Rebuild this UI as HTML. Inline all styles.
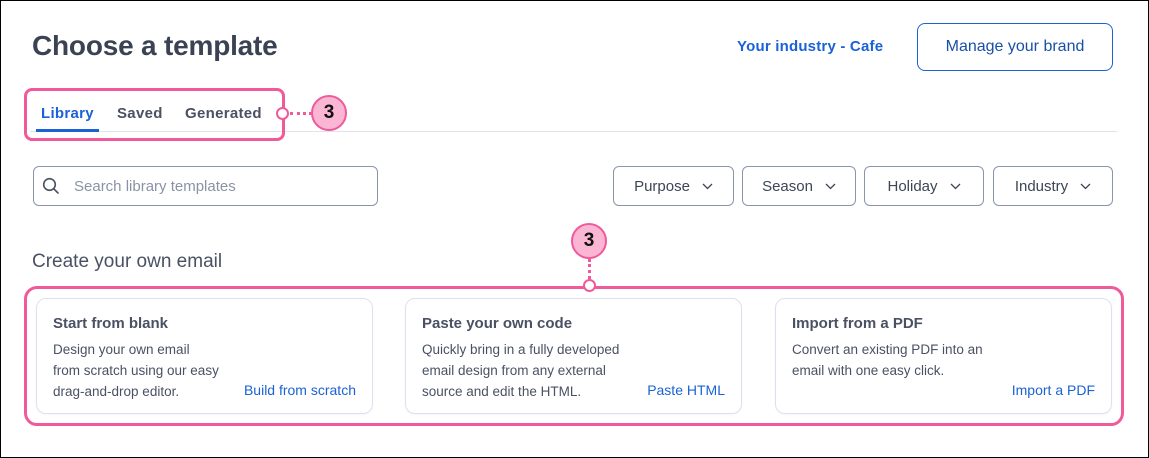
<!DOCTYPE html>
<html><head><style>
*{margin:0;padding:0;box-sizing:border-box}
body{width:1149px;height:458px;background:#fff;font-family:"Liberation Sans",sans-serif;position:relative;overflow:hidden}
.frame{position:absolute;left:0;top:0;width:1149px;height:458px;border:1px solid #000}
.a{position:absolute;white-space:nowrap}
h1{position:absolute;left:32px;top:30px;font-size:28px;font-weight:bold;color:#3a4254;letter-spacing:-0.2px}
.blue{color:#1a62d6}
.btn{position:absolute;border:1px solid #1a62d6;border-radius:8px;color:#1a4fa8;font-size:16px;display:flex;align-items:center;justify-content:center}
.dd{position:absolute;top:166px;height:40px;border:1px solid #8a95ab;border-radius:6px;font-size:15px;color:#3d4556;display:flex;align-items:center;justify-content:center;gap:12px}
.dd svg{width:11px;height:7px}
.card{position:absolute;top:298px;width:337px;height:116px;border:1px solid #dbe2ee;border-radius:10px;box-shadow:0 1px 2px rgba(0,0,0,.04)}
.card .t{position:absolute;left:16px;top:16px;font-size:15px;font-weight:bold;color:#4a5163}
.card .b{position:absolute;left:16px;top:40px;font-size:13.5px;line-height:21px;color:#4a5163;width:250px}
.card .l{position:absolute;right:16px;top:83px;font-size:14px;color:#1a62d6}
.pink{position:absolute;border:3px solid #f05a9a;border-radius:8px}
.dot{position:absolute;width:13px;height:13px;border:2.5px solid #f05a9a;border-radius:50%;background:#fff}
.num{position:absolute;width:36px;height:36px;border:2.5px solid #f05a9a;border-radius:50%;background:#fbb6d3;font-weight:bold;font-size:19px;color:#111;display:flex;align-items:center;justify-content:center}
.tab{position:absolute;top:105px;font-size:15px;font-weight:bold;letter-spacing:0.3px;white-space:nowrap}
</style></head><body>
<div class="frame"></div>
<h1>Choose a template</h1>
<div class="a blue" style="left:737px;top:38px;font-size:15px;font-weight:bold;letter-spacing:0.2px">Your industry - Cafe</div>
<div class="btn" style="left:917px;top:23px;width:196px;height:48px">Manage your brand</div>

<div class="a" style="left:30px;top:131px;width:1087px;height:1px;background:#dfe3ea"></div>
<div class="tab blue" style="left:41px">Library</div>
<div class="a" style="left:36px;top:129px;width:63px;height:3px;background:#1a62d6"></div>
<div class="tab" style="left:117px;color:#4a5163">Saved</div>
<div class="tab" style="left:185px;color:#4a5163">Generated</div>
<div class="pink" style="left:24px;top:88px;width:261px;height:53px"></div>
<div class="a" style="left:290px;top:112px;width:22px;border-top:3px dotted #f05a9a"></div>
<div class="dot" style="left:276px;top:107px"></div>
<div class="num" style="left:311px;top:95px">3</div>

<div class="a" style="left:33px;top:166px;width:345px;height:40px;border:1px solid #8a95ab;border-radius:6px"></div>
<svg class="a" style="left:42px;top:177px" width="18" height="18" viewBox="0 0 18 18"><circle cx="7.5" cy="7.5" r="5.8" fill="none" stroke="#4a5163" stroke-width="1.6"/><path d="M11.8 11.8L16 16" stroke="#4a5163" stroke-width="1.6" stroke-linecap="round"/></svg>
<div class="a" style="left:74px;top:178px;font-size:15px;color:#8a93a6">Search library templates</div>

<div class="dd" style="left:613px;width:121px">Purpose<svg viewBox="0 0 11 7"><path d="M1 1l4.5 4.5L10 1" fill="none" stroke="#3d4556" stroke-width="1.3"/></svg></div>
<div class="dd" style="left:742px;width:114px">Season<svg viewBox="0 0 11 7"><path d="M1 1l4.5 4.5L10 1" fill="none" stroke="#3d4556" stroke-width="1.3"/></svg></div>
<div class="dd" style="left:864px;width:120px">Holiday<svg viewBox="0 0 11 7"><path d="M1 1l4.5 4.5L10 1" fill="none" stroke="#3d4556" stroke-width="1.3"/></svg></div>
<div class="dd" style="left:993px;width:120px">Industry<svg viewBox="0 0 11 7"><path d="M1 1l4.5 4.5L10 1" fill="none" stroke="#3d4556" stroke-width="1.3"/></svg></div>

<div class="a" style="left:32px;top:251px;font-size:19px;color:#4a5163">Create your own email</div>
<div class="num" style="left:571px;top:223px">3</div>
<div class="a" style="left:588px;top:259px;height:20px;border-left:3px dotted #f05a9a"></div>
<div class="pink" style="left:24px;top:286px;width:1100px;height:140px;border-radius:13px"></div>
<div class="dot" style="left:583px;top:279px"></div>

<div class="card" style="left:36px"><div class="t">Start from blank</div><div class="b">Design your own email<br>from scratch using our easy<br>drag-and-drop editor.</div><div class="l">Build from scratch</div></div>
<div class="card" style="left:405px"><div class="t">Paste your own code</div><div class="b">Quickly bring in a fully developed<br>email design from any external<br>source and edit the HTML.</div><div class="l">Paste HTML</div></div>
<div class="card" style="left:775px"><div class="t">Import from a PDF</div><div class="b">Convert an existing PDF into an<br>email with one easy click.</div><div class="l">Import a PDF</div></div>
</body></html>
